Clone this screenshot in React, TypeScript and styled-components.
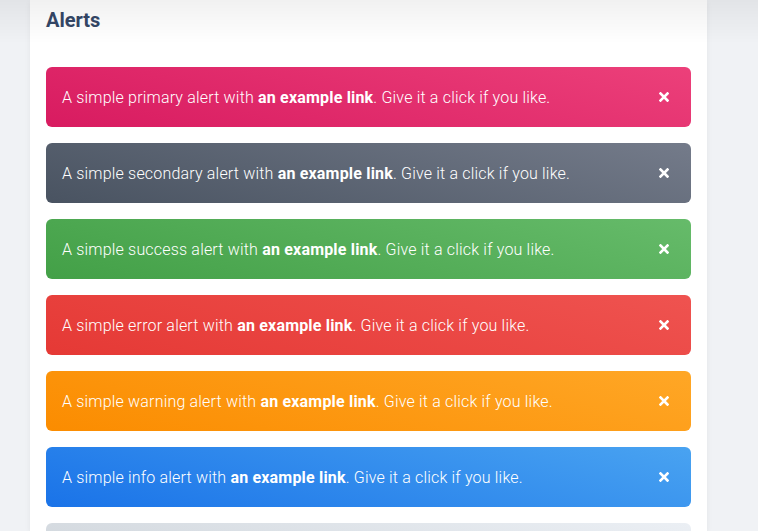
import React from "react";
import styled, { createGlobalStyle } from "styled-components";

const Global = createGlobalStyle`
  html, body { margin: 0; padding: 0; }
  body {
    background: #f0f2f5;
    font-family: Roboto, "Liberation Sans", sans-serif;
    overflow: hidden;
  }
`;

const Page = styled.div`
  display: flex;
  padding-left: 30px;
  height: 531px;
  overflow: hidden;
`;

const Card = styled.section`
  width: 677px;
  background: #ffffff;
  box-shadow: 0 2px 6px rgba(0, 0, 0, 0.06);
  padding: 0 16px;
  box-sizing: border-box;
`;

const Title = styled.h5`
  margin: 0;
  padding: 7px 0 0;
  height: 67px;
  box-sizing: border-box;
  font-size: 20px;
  line-height: 1.375;
  font-weight: 700;
  color: #344767;
`;

const Fade = styled.div`
  position: fixed;
  left: 0;
  top: 0;
  right: 0;
  height: 44px;
  background: linear-gradient(rgba(0, 0, 0, 0.055), rgba(0, 0, 0, 0));
  pointer-events: none;
`;

const List = styled.div`
  display: flex;
  flex-direction: column;
  gap: 16px;
`;

const gradients: Record<string, string> = {
  primary: "linear-gradient(195deg, #ec407a, #d81b60)",
  secondary: "linear-gradient(195deg, #747b8a, #495361)",
  success: "linear-gradient(195deg, #66bb6a, #43a047)",
  error: "linear-gradient(195deg, #ef5350, #e53935)",
  warning: "linear-gradient(195deg, #ffa726, #fb8c00)",
  info: "linear-gradient(195deg, #49a3f1, #1a73e8)",
  light: "linear-gradient(195deg, #ebeff4, #ced4da)",
};

const Alert = styled.div<{ $kind: string }>`
  min-height: 60px;
  box-sizing: border-box;
  display: flex;
  align-items: center;
  justify-content: space-between;
  padding: 0 16px;
  border-radius: 6px;
  background: ${(p) => gradients[p.$kind]};
  color: #ffffff;
`;

const Text = styled.span`
  font-size: 16px;
  font-weight: 300;
  letter-spacing: 0.0115em;
  line-height: 1.5;
  padding-top: 1px;
`;

const Link = styled.a`
  font-weight: 700;
  color: #ffffff;
  text-decoration: none;
`;

const Close = styled.span`
  line-height: 0;
  color: #ffffff;
  margin-right: 6px;
  cursor: pointer;
  display: flex;
  align-items: center;
`;

const items = ["primary", "secondary", "success", "error", "warning", "info"];

export default function App() {
  return (
    <>
      <Global />
      <Page>
        <Card>
          <Title>Alerts</Title>
          <List>
            {items.map((k) => (
              <Alert key={k} $kind={k}>
                <Text>
                  A simple {k} alert with <Link href="#">an example link</Link>. Give it a
                  click if you like.
                </Text>
                <Close>
                  <svg width="10" height="10" viewBox="0 0 10 10">
                    <path d="M1.5 1.5 L8.5 8.5 M8.5 1.5 L1.5 8.5" stroke="#fff" strokeWidth="2.6" strokeLinecap="square" />
                  </svg>
                </Close>
              </Alert>
            ))}
            <Alert $kind="light" />
          </List>
        </Card>
      </Page>
      <Fade />
    </>
  );
}
